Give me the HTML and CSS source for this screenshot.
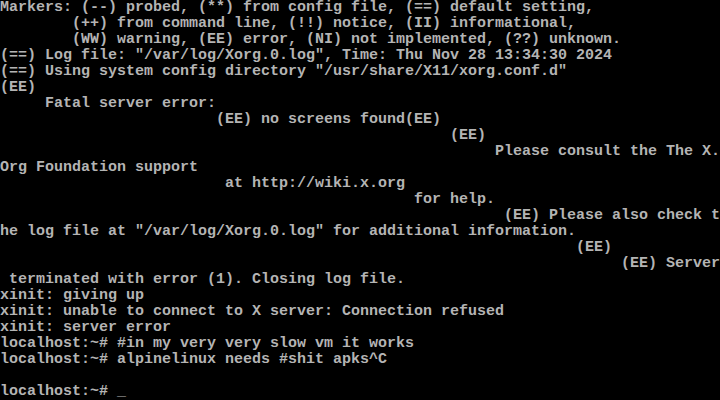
FILE: index.html
```html
<!DOCTYPE html>
<html lang="en">
<head>
<meta charset="utf-8">
<title>tty1</title>
<link rel="stylesheet" href="styles.css">
</head>
<body>
<div class="screen">
<div class="line">Markers: (--) probed, (**) from config file, (==) default setting,</div>
<div class="line">        (++) from command line, (!!) notice, (II) informational,</div>
<div class="line">        (WW) warning, (EE) error, (NI) not implemented, (??) unknown.</div>
<div class="line">(==) Log file: "/var/log/Xorg.0.log", Time: Thu Nov 28 13:34:30 2024</div>
<div class="line">(==) Using system config directory "/usr/share/X11/xorg.conf.d"</div>
<div class="line">(EE)</div>
<div class="line">     Fatal server error:</div>
<div class="line">                        (EE) no screens found(EE)</div>
<div class="line">                                                  (EE)</div>
<div class="line">                                                       Please consult the The X.</div>
<div class="line">Org Foundation support</div>
<div class="line">                         at http://wiki.x.org</div>
<div class="line">                                              for help.</div>
<div class="line">                                                        (EE) Please also check t</div>
<div class="line">he log file at "/var/log/Xorg.0.log" for additional information.</div>
<div class="line">                                                                (EE)</div>
<div class="line">                                                                     (EE) Server</div>
<div class="line"> terminated with error (1). Closing log file.</div>
<div class="line">xinit: giving up</div>
<div class="line">xinit: unable to connect to X server: Connection refused</div>
<div class="line">xinit: server error</div>
<div class="line">localhost:~# #in my very very slow vm it works</div>
<div class="line">localhost:~# alpinelinux needs #shit apks^C</div>
<div class="line"> </div>
<div class="line">localhost:~# <span class="cursor">_</span></div>
</div>
</body>
</html>
```
FILE: styles.css
```css
html, body {
  margin: 0;
  padding: 0;
  background: #000;
}
.screen {
  width: 720px;
  height: 400px;
  overflow: hidden;
  background: #000;
  color: #b4b4b4;
  font-family: "Liberation Mono", "DejaVu Sans Mono", monospace;
  font-size: 15px;
  line-height: 16px;
  font-weight: bold;
}
.line {
  height: 16px;
  white-space: pre;
}
.cursor {
  color: #b4b4b4;
}
```
